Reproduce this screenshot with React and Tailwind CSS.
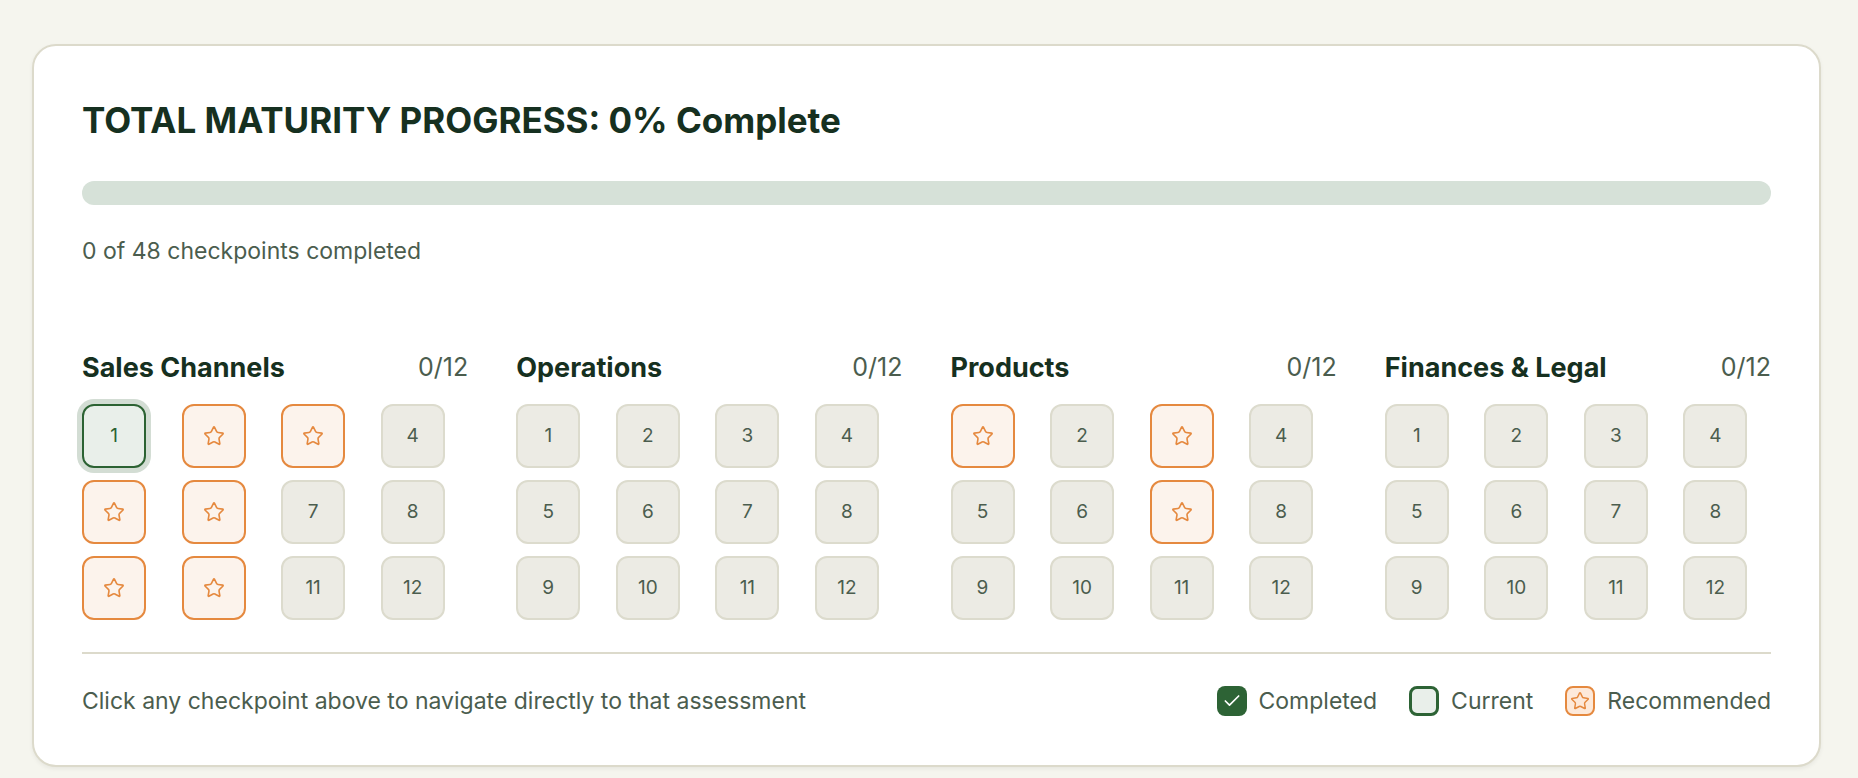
import React from "react";
import { Star, Check } from "lucide-react";

const categories = [
  { name: "Sales Channels", rec: [2, 3, 5, 6, 9, 10], current: 1 },
  { name: "Operations", rec: [] },
  { name: "Products", rec: [1, 3, 7] },
  { name: "Finances & Legal", rec: [] },
];

const Checkpoint = ({ n, rec, current }) => {
  if (current) {
    return (
      <button className="w-16 h-16 rounded-xl border-2 border-[#2c6233] bg-[#e9efea] ring-[5px] ring-[#d3ddd4] text-[19px] text-[#2c6233] flex items-center justify-center">
        {n}
      </button>
    );
  }
  if (rec) {
    return (
      <button className="w-16 h-16 rounded-xl border-2 border-[#e5893f] bg-[#fcf3ec] text-[#e5893f] flex items-center justify-center">
        <Star size={22} strokeWidth={1.75} />
      </button>
    );
  }
  return (
    <button className="w-16 h-16 rounded-xl border-2 border-[#dcdbcd] bg-[#ecebe4] text-[19px] text-[#4b5d4e] flex items-center justify-center">
      {n}
    </button>
  );
};

const Category = ({ cat }) => (
  <div>
    <div className="flex items-center justify-between h-8">
      <h3 className="text-[27px] font-bold text-[#163020]">{cat.name}</h3>
      <span className="text-[25px] text-[#4b5d4e]">0/12</span>
    </div>
    <div className="grid grid-cols-4 gap-3 mt-5">
      {Array.from({ length: 12 }, (_, i) => i + 1).map((n) => (
        <Checkpoint
          key={n}
          n={n}
          rec={cat.rec.includes(n)}
          current={cat.current === n}
        />
      ))}
    </div>
  </div>
);

export default function App() {
  return (
    <div
      className="min-h-screen bg-[#f5f5ee] pl-8 pr-[37px] pt-11"
      style={{ fontFamily: "Inter, 'Liberation Sans', sans-serif" }}
    >
      <div className="bg-white border-2 border-[#dcdacb] rounded-3xl shadow-[0_2px_4px_rgba(0,0,0,0.06)] px-12 pt-[52px] pb-[47px]">
        <h1 className="text-[35px] leading-[44px] font-bold text-[#163020]">
          TOTAL MATURITY PROGRESS: 0% Complete
        </h1>
        <div className="mt-[39px] h-6 rounded-full bg-[#d6e1d8]" />
        <p className="mt-[30px] text-[23px] leading-8 text-[#4b5d4e]">0 of 48 checkpoints completed</p>
        <div className="grid grid-cols-4 gap-12 mt-[85px]">
          {categories.map((c) => (
            <Category key={c.name} cat={c} />
          ))}
        </div>
        <div className="mt-8 border-t-2 border-[#dcdacb]" />
        <div className="mt-[30px] flex items-center justify-between text-[23px] leading-[34px] text-[#4b5d4e]">
          <p>Click any checkpoint above to navigate directly to that assessment</p>
          <div className="flex items-center gap-8">
            <div className="flex items-center gap-3">
              <span className="w-[30px] h-[30px] rounded-lg bg-[#2d6335] flex items-center justify-center text-white">
                <Check size={20} strokeWidth={2} />
              </span>
              Completed
            </div>
            <div className="flex items-center gap-3">
              <span className="w-[30px] h-[30px] rounded-lg border-[3px] border-[#2d6335] bg-[#e9efea]" />
              Current
            </div>
            <div className="flex items-center gap-3">
              <span className="w-[30px] h-[30px] rounded-lg border-2 border-[#e5893f] bg-[#fde9da] flex items-center justify-center text-[#e5893f]">
                <Star size={20} strokeWidth={1.75} />
              </span>
              Recommended
            </div>
          </div>
        </div>
      </div>
    </div>
  );
}
